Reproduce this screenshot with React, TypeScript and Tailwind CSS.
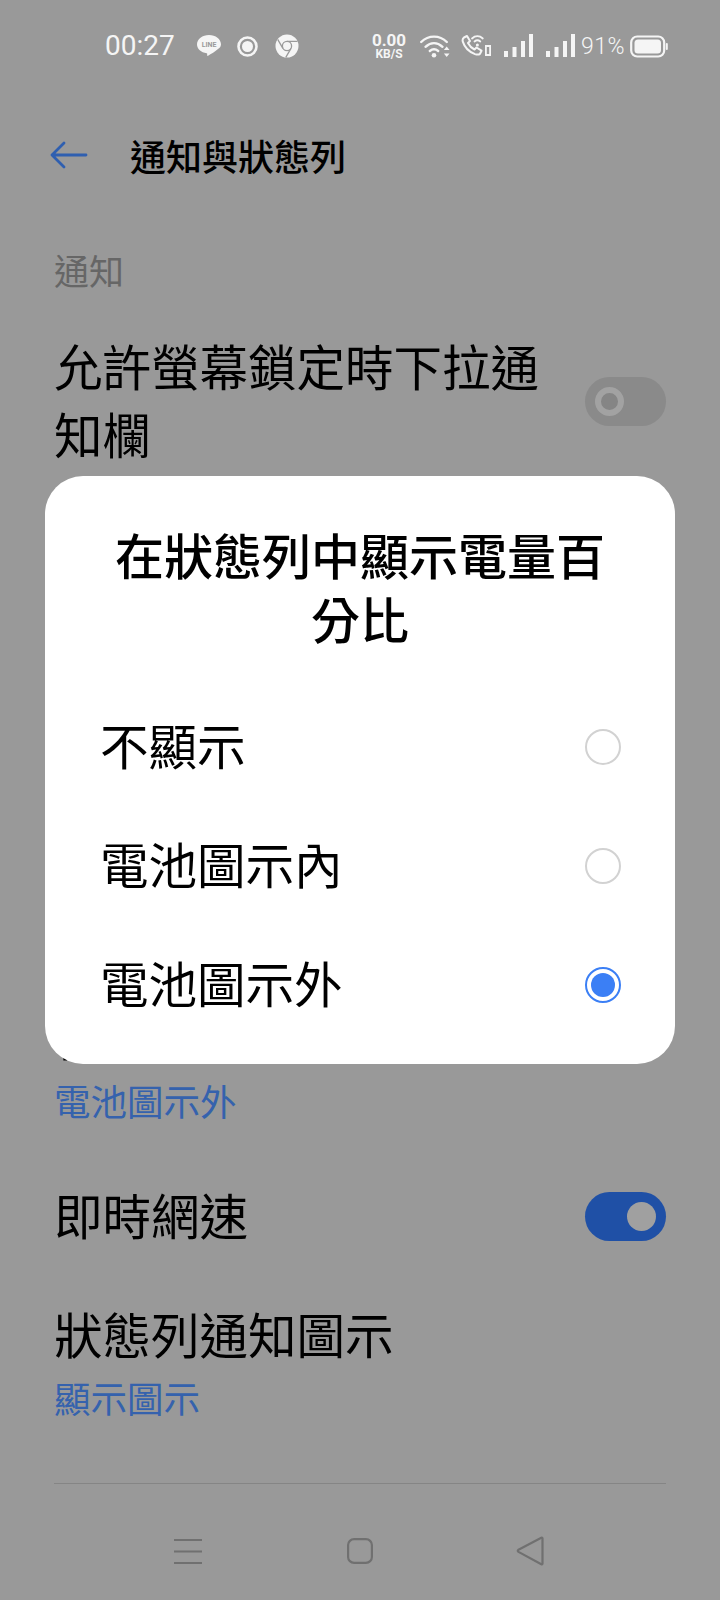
const cjk = "font-['Noto_Sans_CJK_TC',sans-serif]";

function LineIcon() {
  return (
    <svg width="26" height="24" viewBox="0 0 26 24" fill="none">
      <path d="M13 1C6.400 1 1 5.100 1 10.300c0 4.600 4.100 8.200 9.700 9 .8.200.5 1 .4 1.700-.1.600.3 1.200 1 .8 2.600-1.400 7.500-4.500 9.900-6.700C24 13.800 25 12.200 25 10.300 25 5.100 19.600 1 13 1z" fill="#f5f5f5" />
      <text x="13" y="13.300" textAnchor="middle" fontSize="7" fontWeight="700" fill="#9a9a9a" fontFamily="Roboto, sans-serif">LINE</text>
    </svg>
  );
}

function RecordIcon() {
  return (
    <svg width="21" height="21" viewBox="0 0 21 21" fill="none">
      <circle cx="10.500" cy="10.500" r="9" stroke="#f5f5f5" strokeWidth="2.600" />
      <circle cx="10.500" cy="10.500" r="5.500" fill="#f5f5f5" />
    </svg>
  );
}

function ChromeIcon() {
  return (
    <svg width="24" height="24" viewBox="0 0 24 24" fill="none">
      <circle cx="12" cy="12" r="11.500" fill="#f5f5f5" />
      <circle cx="12" cy="12" r="4.600" stroke="#9a9a9a" strokeWidth="1.300" />
      <path d="M12 7.400h10.500M7.900 14.300 2.700 5.400M16 14.400 10.800 23.300" stroke="#9a9a9a" strokeWidth="1.300" />
    </svg>
  );
}

function WifiIcon() {
  return (
    <svg width="30" height="24" viewBox="0 0 30 24" fill="none" stroke="#f5f5f5" strokeLinecap="round">
      <path d="M1.200 8C8.500 .8 19.500 .8 26.800 8" strokeWidth="2.400" />
      <path d="M5.500 12.800c5.300-4.800 11.700-4.800 17 0" strokeWidth="2.400" />
      <path d="M9.800 17c2.800-2.300 5.600-2.300 8.400 0" strokeWidth="2.400" />
      <circle cx="14" cy="21.300" r="2.300" fill="#f5f5f5" stroke="none" />
      <path d="M26.700 12.500 29.500 16h-5.600zM26.700 23l2.800-3.500h-5.600z" fill="#f5f5f5" stroke="none" />
    </svg>
  );
}

function CallWifiIcon() {
  return (
    <svg width="31" height="24" viewBox="0 0 31 24" fill="none" stroke="#f5f5f5">
      <path d="M3 3.500 6 2l3 5-2 2c1.500 3 3.500 5 6.500 6.500l2-2 5 3.200-1.500 3c-1 1-3 1.100-5 .4C8.500 18 3.500 13 1.800 7.600 1.300 6 1.800 4.500 3 3.500z" strokeWidth="2" strokeLinejoin="round" />
      <path d="M11 4.500c3.200-3 7.600-3 10.800 0M13.500 7.500c2-1.700 3.800-1.700 5.800 0" strokeWidth="1.800" strokeLinecap="round" />
      <circle cx="16.400" cy="11" r="1.500" fill="#f5f5f5" stroke="none" />
      <rect x="24" y="11" width="6" height="11" fill="#f5f5f5" stroke="none" />
      <rect x="25.800" y="13" width="2.400" height="7" fill="#9a9a9a" stroke="none" />
    </svg>
  );
}

function SignalIcon() {
  return (
    <svg width="29" height="24" viewBox="0 0 29 24" fill="#f5f5f5">
      <rect x="0" y="17" width="4" height="6" />
      <rect x="8.500" y="13" width="4" height="10" />
      <rect x="17" y="7" width="4" height="16" />
      <rect x="25" y="0" width="4" height="23" />
    </svg>
  );
}

function BatteryIcon() {
  return (
    <svg width="38" height="23" viewBox="0 0 38 23" fill="none">
      <rect x="1.200" y="1.500" width="33" height="20" rx="6" stroke="#f5f5f5" strokeWidth="2.200" />
      <rect x="4.500" y="4.500" width="26.500" height="14" rx="3.500" fill="#f5f5f5" />
      <rect x="35.800" y="8" width="2" height="7" rx="1" fill="#f5f5f5" />
    </svg>
  );
}

function StatusBar() {
  return (
    <div className="h-[92px] flex items-center pl-[105px] font-['Roboto',sans-serif] text-[#f5f5f5]">
      <span className="text-[28px] leading-none w-[91px]">00:27</span>
      <div className="w-[41px]"><LineIcon /></div>
      <div className="w-[38px]"><RecordIcon /></div>
      <div className="w-[90px]"><ChromeIcon /></div>
      <div className="w-[55px] pr-[7px] flex flex-col items-center font-bold -space-y-[1px]">
        <span className="text-[17px] leading-[17px]">0.00</span>
        <span className="text-[12px] leading-[13px]">KB/S</span>
      </div>
      <div className="w-[41px]"><WifiIcon /></div>
      <div className="w-[43px]"><CallWifiIcon /></div>
      <div className="w-[42px]"><SignalIcon /></div>
      <div className="w-[35px]"><SignalIcon /></div>
      <span className="text-[23px] leading-none w-[49px] font-light tracking-[0.5px]">91%</span>
      <BatteryIcon />
    </div>
  );
}

function Toggle({ on }: { on: boolean }) {
  if (on) {
    return (
      <div className="mt-[4px] w-[81px] h-[49px] rounded-full bg-[#1f50a6] flex items-center justify-end pr-[10px]">
        <div className="w-[29px] h-[29px] rounded-full bg-[#a0a0a0]" />
      </div>
    );
  }
  return (
    <div className="mt-[5px] w-[81px] h-[49px] rounded-full bg-[#8a8a8a] flex items-center pl-[10px]">
      <div className="w-[29px] h-[29px] rounded-full border-[6px] border-[#a2a2a2] bg-[#858585]" />
    </div>
  );
}

function Radio({ on }: { on: boolean }) {
  if (on) {
    return (
      <div className="w-[36px] h-[36px] rounded-full border-[2.500px] border-[#3b7ff5] flex items-center justify-center">
        <div className="w-[24px] h-[24px] rounded-full bg-[#3b7ff5]" />
      </div>
    );
  }
  return <div className="w-[36px] h-[36px] rounded-full border-[2.500px] border-[#d2d2d2]" />;
}

function Dialog() {
  const options = [
    { label: "不顯示", on: false },
    { label: "電池圖示內", on: false },
    { label: "電池圖示外", on: true },
  ];
  return (
    <div className={`absolute left-[45px] top-[476px] w-[630px] h-[588px] rounded-[38px] bg-white text-black ${cjk}`}>
      <h2 className="pt-[46px] px-[60px] text-center text-[49px] leading-[64px] font-medium">在狀態列中顯示電量百分比</h2>
      <div className="mt-[37px] flex flex-col">
        {options.map((o) => (
          <div key={o.label} className="h-[119px] flex items-center justify-between pl-[55px] pr-[54px]">
            <span className="text-[48.500px] leading-[68px] -translate-y-[3px]">{o.label}</span>
            <Radio on={o.on} />
          </div>
        ))}
      </div>
    </div>
  );
}

function NavBar() {
  return (
    <div className="h-[116px] pt-[18px] flex items-center pl-[174px]">
      <svg width="28" height="26" viewBox="0 0 28 26" fill="none" stroke="#707070" strokeWidth="2">
        <path d="M0 2h28M0 13.500h28M0 25h28" />
      </svg>
      <svg className="ml-[145px]" width="26" height="26" viewBox="0 0 26 26" fill="none" stroke="#707070" strokeWidth="2.200">
        <rect x="1.100" y="1.100" width="23.800" height="23.800" rx="6" />
      </svg>
      <svg className="ml-[143px]" width="28" height="30" viewBox="0 0 28 30" fill="none" stroke="#707070" strokeWidth="2.200" strokeLinejoin="round">
        <path d="M26.500 2.500c0-.8-.6-1-1.200-.7L2.500 13.700c-1 .6-1 1.600 0 2.200l22.800 12.300c.6.300 1.200.1 1.200-.7z" />
      </svg>
    </div>
  );
}

export default function App() {
  return (
    <div className={`relative w-[720px] h-[1600px] overflow-hidden bg-[#999999] text-black ${cjk}`}>
      <StatusBar />
      <header className="h-[126px] flex items-center pl-[50px]">
        <svg width="38" height="28" viewBox="0 0 38 28" fill="none" stroke="#2f5fb0" strokeWidth="2.800" strokeLinecap="round" strokeLinejoin="round">
          <path d="M36 14H2M14 2 2 14l12 12" />
        </svg>
        <h1 className="ml-[42px] text-[36px] leading-[48px] font-medium">通知與狀態列</h1>
      </header>
      <main className="px-[54px]">
        <div className="mt-[28px] text-[35px] leading-[48px] text-[#666666]">通知</div>
        <div className="mt-[37px] flex items-center justify-between">
          <div className="w-[500px] text-[48.500px] leading-[68px]">允許螢幕鎖定時下拉通知欄</div>
          <Toggle on={false} />
        </div>
        <div className="mt-[534px] text-[48.500px] leading-[68px] whitespace-nowrap">在狀態列中顯示電量百分比</div>
        <div className="mt-[8px] text-[36.500px] leading-[48px] text-[#3562ad]">電池圖示外</div>
        <div className="mt-[55px] flex items-center justify-between h-[68px]">
          <span className="text-[48.500px] leading-[68px]">即時網速</span>
          <Toggle on />
        </div>
        <div className="mt-[51px] text-[48.500px] leading-[68px]">狀態列通知圖示</div>
        <div className="mt-[7px] text-[36.500px] leading-[48px] text-[#3562ad]">顯示圖示</div>
        <div className="mt-[61px] h-px bg-[#858585]" />
      </main>
      <NavBar />
      <Dialog />
    </div>
  );
}
